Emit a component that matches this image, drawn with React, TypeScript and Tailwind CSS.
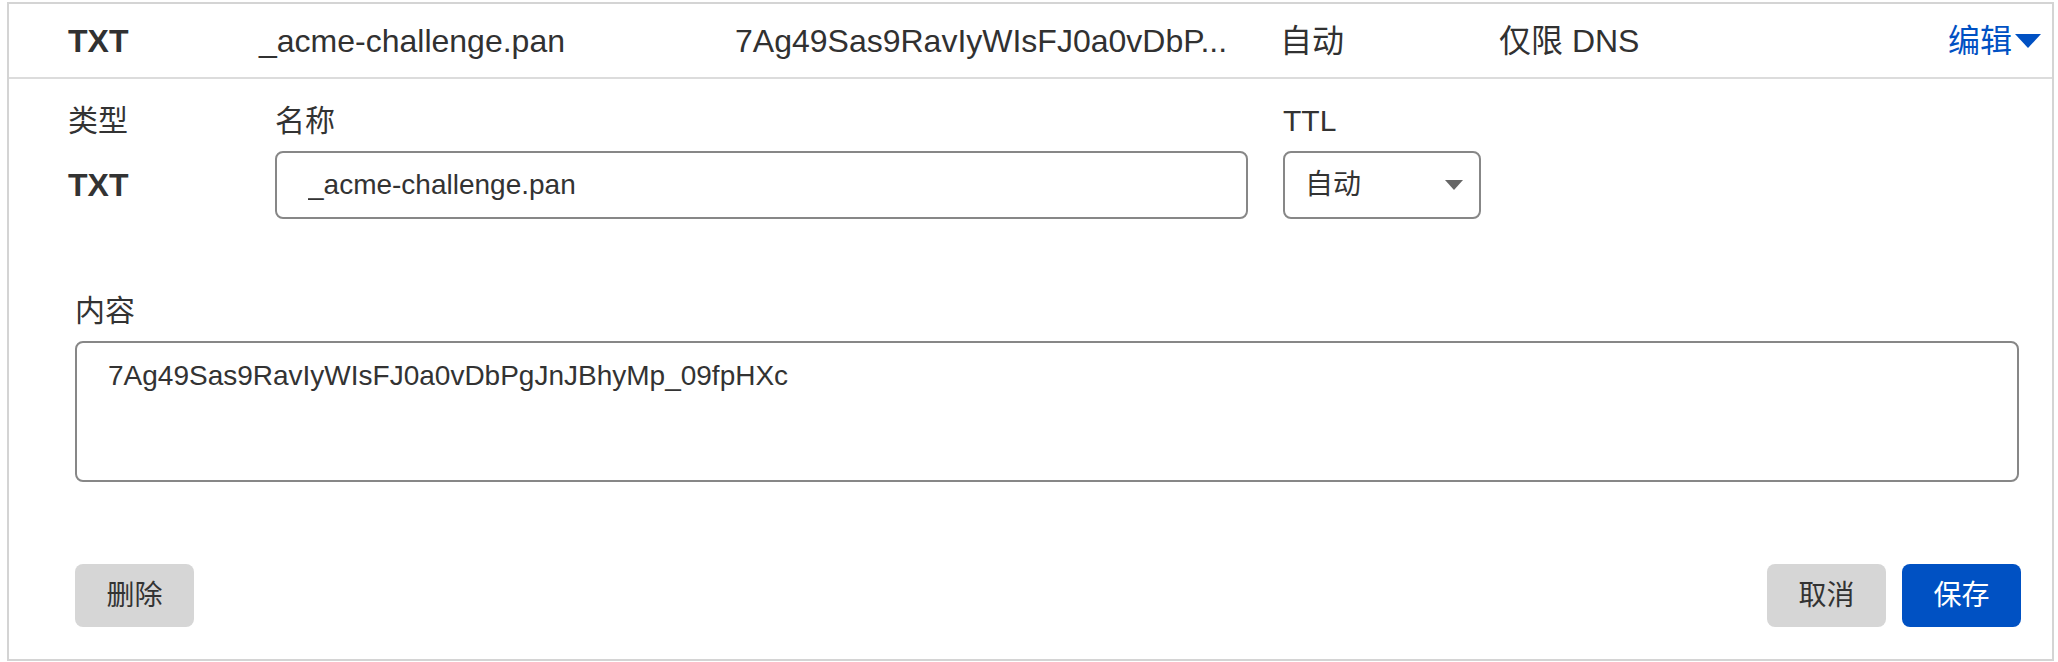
import React from "react";

export default function App() {
  return (
    <div className="w-[2058px] h-[662px] bg-white pl-[7px] pr-[4px] pt-[2px] font-['Liberation_Sans','Noto_Sans_CJK_SC',sans-serif] text-[#333]">
      <div className="h-[659px] border-2 border-[#d4d4d4] flex flex-col">
        {/* record row */}
        <div className="h-[75px] shrink-0 flex items-center border-b-2 border-[#dcdcdc] pl-[59px] pr-[11px] text-[32px] text-[#313131]">
          <div className="w-[191px] font-bold">TXT</div>
          <div className="w-[476px]">_acme-challenge.pan</div>
          <div className="w-[545px]">7Ag49Sas9RavIyWIsFJ0a0vDbP...</div>
          <div className="w-[219px]">自动</div>
          <div className="flex-1">仅限 DNS</div>
          <button className="flex items-center gap-[3px] text-[#0051c3]">
            编辑
            <svg viewBox="0 0 26 14" className="w-[26px] h-[14px]" fill="currentColor">
              <path d="M0 0h26L13 14z" />
            </svg>
          </button>
        </div>

        {/* edit form */}
        <div className="flex pl-[59px] pt-[22px]">
          <div className="w-[207px]">
            <div className="h-[40px] leading-[40px] text-[30px]">类型</div>
            <div className="mt-[10px] h-[68px] flex items-center text-[32px] font-bold">TXT</div>
          </div>
          <div className="w-[973px] mr-[35px]">
            <div className="h-[40px] leading-[40px] text-[30px]">名称</div>
            <input
              defaultValue="_acme-challenge.pan"
              className="mt-[10px] w-full h-[68px] border-2 border-[#878787] rounded-[8px] px-[31px] text-[28px] outline-none"
            />
          </div>
          <div className="w-[198px]">
            <div className="h-[40px] leading-[40px] text-[30px]">TTL</div>
            <div className="mt-[10px] h-[68px] border-2 border-[#878787] rounded-[8px] pl-[20px] pr-[16px] flex items-center justify-between text-[28px]">
              <span>自动</span>
              <svg viewBox="0 0 18 10" className="w-[18px] h-[10px]" fill="#666">
                <path d="M0 0h18L9 10z" />
              </svg>
            </div>
          </div>
        </div>

        <div className="pl-[66px] pr-[33px] mt-[72px]">
          <div className="h-[40px] leading-[40px] text-[30px]">内容</div>
          <textarea
            defaultValue="7Ag49Sas9RavIyWIsFJ0a0vDbPgJnJBhyMp_09fpHXc"
            className="mt-[10px] block w-full h-[141px] border-2 border-[#878787] rounded-[8px] px-[31px] pt-[13px] text-[28px] leading-[40px] resize-none outline-none"
          />
        </div>

        <div className="flex justify-between pl-[66px] pr-[31px] mt-[82px]">
          <button className="w-[119px] h-[63px] rounded-[8px] bg-[#d6d6d6] text-[28px] text-[#333]">删除</button>
          <div className="flex gap-[16px]">
            <button className="w-[119px] h-[63px] rounded-[8px] bg-[#d6d6d6] text-[28px] text-[#333]">取消</button>
            <button className="w-[119px] h-[63px] rounded-[8px] bg-[#0051c3] text-[28px] text-white">保存</button>
          </div>
        </div>
      </div>
    </div>
  );
}
